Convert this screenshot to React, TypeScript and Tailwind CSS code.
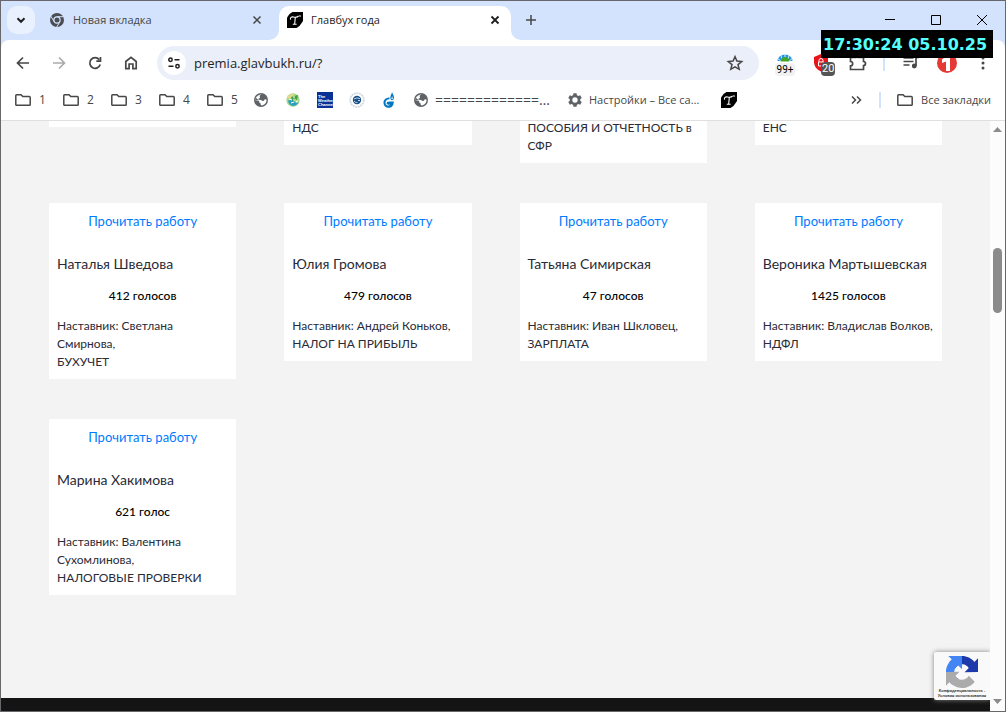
import type { ReactNode } from "react";

type Entry = { name: string; votes: string; mentor: string; topic: string };

const tails: string[] = ["", "НДС", "ПОСОБИЯ И ОТЧЕТНОСТЬ в СФР", "ЕНС"];

const entries: Entry[] = [
  { name: "Наталья Шведова", votes: "412 голосов", mentor: "Светлана Смирнова", topic: "БУХУЧЕТ" },
  { name: "Юлия Громова", votes: "479 голосов", mentor: "Андрей Коньков", topic: "НАЛОГ НА ПРИБЫЛЬ" },
  { name: "Татьяна Симирская", votes: "47 голосов", mentor: "Иван Шкловец", topic: "ЗАРПЛАТА" },
  { name: "Вероника Мартышевская", votes: "1425 голосов", mentor: "Владислав Волков", topic: "НДФЛ" },
  { name: "Марина Хакимова", votes: "621 голос", mentor: "Валентина Сухомлинова", topic: "НАЛОГОВЫЕ ПРОВЕРКИ" },
];

function Line({ children, size = 16, box = "0 0 16 16", w = 1.5 }: { children: ReactNode; size?: number; box?: string; w?: number }) {
  return (
    <svg width={size} height={size} viewBox={box} fill="none" stroke="currentColor" strokeWidth={w} aria-hidden="true" className="shrink-0">
      {children}
    </svg>
  );
}

function TIcon() {
  return (
    <svg width="16" height="16" viewBox="0 0 16 16" aria-hidden="true" className="shrink-0">
      <path d="M5.500 0H16V9L12.500 14L9.500 16H0V5.500L2.500 2Z" fill="#000" />
      <path d="M3.600 7.600C2.800 5.600 4.400 4.600 6.400 5C8.600 5.500 10.600 5.400 11.600 3.900M8.300 5.500L7.700 11.800M5.800 12.200H9.600M12.800 3.200L13.200 4.800" stroke="#fff" strokeWidth="1.100" fill="none" />
    </svg>
  );
}

function ChromeIcon() {
  return (
    <svg width="16" height="16" viewBox="0 0 16 16" aria-hidden="true" className="shrink-0">
      <circle cx="8" cy="8" r="7" fill="#4a4d51" />
      <circle cx="8" cy="8" r="3.700" fill="#d3e3fd" />
      <circle cx="8" cy="8" r="2.500" fill="#4a4d51" />
      <path d="M8 4.700H14.500M5.100 9.700L1.900 4.200M10.900 9.700L7.700 15" stroke="#d3e3fd" strokeWidth="1" />
    </svg>
  );
}

function Globe() {
  return (
    <svg width="16" height="16" viewBox="0 0 16 16" aria-hidden="true" className="shrink-0">
      <circle cx="8" cy="8" r="7" fill="#5f6368" />
      <path d="M8.500 2.600C6.800 3 6.200 4 6.900 4.900C7.600 5.700 6.200 6.200 5.400 6.800C4.800 7.600 6 8 7.600 7.900C9 7.900 9.200 9.200 10.300 9.100C11.400 9 11 7.600 12 7.300L13.600 7.600C13.700 10.600 11.600 13.300 8.600 13.600L7.600 12.500V11.300C6.300 11 5.800 10.200 6 9.300C4.800 9.400 3.500 9 2.600 8.300C2.400 5.200 5 2.600 8.500 2.600Z" fill="#fff" />
      <path d="M2.600 5.500L6 8.600H2.600ZM3 9.200H6.200V11.500L7.300 13.400L4.500 12.600Z" fill="#5f6368" />
    </svg>
  );
}

function Leaf() {
  return (
    <svg width="16" height="16" viewBox="0 0 16 16" aria-hidden="true" className="shrink-0">
      <circle cx="8" cy="8" r="6.700" fill="#a9d98c" />
      <path d="M2 6Q5 1 9 2L6 6Z" fill="#e6d98a" />
      <path d="M3 9Q6 5 9 9T14 9Q13 13 9 14Q4 14 3 9Z" fill="#2f9fc0" />
      <path d="M6 5L13 3L12 8L9 6L7 9Z" fill="#43a047" />
      <path d="M4 7L7 8M8 5L10 5M6 11L9 10M11 10L13 9" stroke="#fff" strokeWidth="1" />
    </svg>
  );
}

function Weather() {
  return (
    <span className="flex h-4 w-4 shrink-0 flex-col justify-end bg-[#0a3296] pb-px pl-px font-['Liberation_Sans'] text-[4px] leading-[4px] font-bold text-white">
      <span>The</span>
      <span>Weather</span>
      <span>Channel</span>
    </span>
  );
}

function Seal() {
  return (
    <svg width="16" height="16" viewBox="0 0 16 16" fill="none" aria-hidden="true" className="shrink-0">
      <circle cx="8" cy="8" r="6.800" stroke="#d2dae2" strokeWidth="1.800" strokeDasharray="2 0.600" />
      <circle cx="8" cy="8" r="4.200" fill="#1d5288" />
      <path d="M5 7Q8 5 11 6.600M5 9Q6.500 11 8.500 10.500M9 8.500H11" stroke="#b9d2e6" strokeWidth="1" />
    </svg>
  );
}

function Flame() {
  return (
    <svg width="16" height="16" viewBox="0 0 16 16" aria-hidden="true" className="shrink-0">
      <path d="M8.500 5.600C5 5.600 2.500 7.800 2.500 10.800C2.500 13.800 4.800 15.800 7.600 15.800C10.800 15.800 12.800 13.600 12.800 9.400H8.200C6.400 9.400 5.600 10.200 5.600 11.300C5.600 12.600 7 13.200 8.900 12.400C8.400 14 5.200 14 4.600 11.500C4.200 9 5.600 7.300 8.500 7.200Z" fill="#0079c2" />
      <path d="M11 0C11 1.800 9.300 3.200 9.300 5.400C9.300 6.900 10 8.200 11 8.200C12.200 8.200 13 7 13 5.400C13 3.400 11.600 2 11 0Z" fill="#0079c2" />
      <path d="M11.100 4L10.500 6.300L11.100 7.400L11.700 6.300Z" fill="#fff" />
    </svg>
  );
}

function Gear() {
  return (
    <svg width="16" height="16" viewBox="0 0 24 24" fill="#5f6368" aria-hidden="true" className="shrink-0">
      <path d="M19.800 13.300a8 8 0 0 0 0-2.600l2.300-1.800-2.300-4-2.800 1.100a8 8 0 0 0-2.200-1.300L14.400 1.800H9.600l-.4 2.900A8 8 0 0 0 7 6L4.200 4.900l-2.300 4 2.300 1.800a8 8 0 0 0 0 2.600l-2.300 1.800 2.300 4L7 18a8 8 0 0 0 2.200 1.300l.4 2.900h4.800l.4-2.900A8 8 0 0 0 17 18l2.800 1.100 2.300-4ZM12 16a4 4 0 1 1 0-8 4 4 0 0 1 0 8Z" />
    </svg>
  );
}

function Folder() {
  return (
    <Line size={20} box="0 0 20 20">
      <path d="M2.800 5.600Q2.800 4.800 3.600 4.800H8L9.800 6.600H16.400Q17.200 6.600 17.200 7.400V14.400Q17.200 15.200 16.400 15.200H3.600Q2.800 15.200 2.800 14.400Z" />
    </Line>
  );
}

function Tabs() {
  return (
    <header className="flex h-[39px] shrink-0 items-end bg-[#d3e3fd]">
      <button aria-label="Поиск вкладок" className="mb-1.5 ml-1.5 flex size-7 shrink-0 items-center justify-center rounded-[10px] bg-[#e9f1fe] text-[#1f1f1f]">
        <Line w={2}><path d="M4.500 6.300L8 9.800L11.500 6.300" /></Line>
      </button>
      <div className="flex h-[34px] w-[234px] shrink-0 items-center pr-1 pb-1.5 pl-3.5 text-[#474747]">
        <ChromeIcon />
        <span className="ml-2 flex-1">Новая вкладка</span>
        <button aria-label="Закрыть вкладку"><Line><path d="M4.500 4.500L11.500 11.500M11.500 4.500L4.500 11.500" /></Line></button>
      </div>
      <svg width="10" height="10" aria-hidden="true" className="shrink-0"><path d="M10 0V10H0A10 10 0 0 0 10 0Z" fill="#fff" /></svg>
      <div className="flex h-[34px] w-[232px] shrink-0 items-center rounded-t-[10px] bg-white px-2 pb-1.5 text-[#1f1f1f]">
        <TIcon />
        <span className="ml-2 flex-1">Главбух года</span>
        <button aria-label="Закрыть вкладку"><Line w={1.800}><path d="M4.500 4.500L11.500 11.500M11.500 4.500L4.500 11.500" /></Line></button>
      </div>
      <svg width="10" height="10" aria-hidden="true" className="shrink-0"><path d="M0 0V10H10A10 10 0 0 1 0 0Z" fill="#fff" /></svg>
      <button aria-label="Новая вкладка" className="mb-3 ml-0.5 text-[#474747]"><Line><path d="M8 3V13M3 8H13" /></Line></button>
      <div className="mr-[15px] mb-3 ml-auto flex gap-[30px] text-black">
        <button aria-label="Свернуть"><Line w={1}><path d="M3 7.500H13" /></Line></button>
        <button aria-label="Развернуть"><Line w={1}><path d="M3.500 3.500H12.500V12.500H3.500Z" /></Line></button>
        <button aria-label="Закрыть"><Line w={1}><path d="M3 3L13 13M13 3L3 13" /></Line></button>
      </div>
    </header>
  );
}

function Toolbar() {
  return (
    <div className="shrink-0 bg-[#d3e3fd]">
      <div className="flex h-[46px] items-center rounded-t-lg bg-white text-[#474747]">
        <div className="flex gap-4 pl-3">
          <button aria-label="Назад"><Line size={20} box="0 0 20 20" w={1.700}><path d="M16 10H4.500M10 4.500L4.500 10L10 15.500" /></Line></button>
          <button aria-label="Вперед" className="text-[#ababab]"><Line size={20} box="0 0 20 20" w={1.700}><path d="M4 10H15.500M10 4.500L15.500 10L10 15.500" /></Line></button>
          <button aria-label="Обновить"><Line size={20} box="0 0 20 20" w={1.700}><path d="M15.200 11.500A5.300 5.300 0 1 1 14.200 6.600M15.500 4V8.200H11.300" /></Line></button>
          <button aria-label="Главная"><Line size={20} box="0 0 20 20" w={1.700}><path d="M4.800 15.700V8.500L10 4.300L15.200 8.500V15.700H11.900V11H8.100V15.700Z" /></Line></button>
        </div>
        <div className="ml-4 flex h-[34px] min-w-0 flex-1 items-center rounded-full bg-[#ebeff9] pr-[14px] pl-[5px]">
          <button aria-label="Сведения о сайте" className="flex size-6 shrink-0 items-center justify-center rounded-full bg-white text-[#1f1f1f]">
            <Line><circle cx="4.500" cy="4.700" r="1.700" /><path d="M8.500 4.700H13.500M2.500 11.200H7.500" /><circle cx="11.500" cy="11.200" r="1.700" /></Line>
          </button>
          <input aria-label="Адресная строка" defaultValue="premia.glavbukh.ru/?" className="ml-2 min-w-0 flex-1 bg-transparent pt-0.5 font-['Open_Sans',sans-serif] text-[13px] text-[#1f1f1f] outline-none" />
          <button aria-label="Добавить в закладки">
            <Line size={20} box="0 0 20 20"><path d="M10 3.600L11.900 8.100L16.700 8.500L13 11.600L14.200 16.300L10 13.800L5.800 16.300L7 11.600L3.300 8.500L8.100 8.100Z" /></Line>
          </button>
        </div>
        <div className="ml-4 flex shrink-0 items-center">
          <button aria-label="Расширение погоды, 99+" className="flex w-5 flex-col items-center pt-1">
            <svg width="16" height="9" viewBox="0 0 16 9" aria-hidden="true">
              <path d="M0.500 7A7.500 6.500 0 0 1 15.500 7Z" fill="#2196e8" />
              <path d="M3.500 0L5 5M8 0V5M12.500 0L11 5M0 4L4 7M16 4L12 7" stroke="#fff" strokeWidth="0.800" />
              <path d="M3.500 7.500A4.500 4.500 0 0 1 12.500 7.500Z" fill="#43a52b" />
            </svg>
            <span className="rounded-sm bg-[#f1f1f1] px-0.5 font-['Roboto',sans-serif] text-[10px] leading-[13px] text-black">99+</span>
          </button>
          <button aria-label="Блокировщик, 20" className="relative ml-[18px]">
            <svg width="16" height="18" viewBox="0 0 16 18" aria-hidden="true">
              <path d="M1 3L8 0L15 3V9Q14 15 8 17.500Q2 15 1 9Z" fill="#e8141c" />
              <path d="M6 8V6.500A2 2 0 0 1 10 6.500V8M5.500 8H10.500V12H5.500Z" stroke="#fff" fill="none" />
            </svg>
            <span className="absolute top-2 left-2 rounded-sm bg-[#555] px-px font-['Roboto',sans-serif] text-[11px] leading-[14px] text-white">20</span>
          </button>
          <button aria-label="Расширения" className="ml-[18px]">
            <Line size={20} box="0 0 20 20" w={1.700}><path d="M3.500 4.500H8.500V3.500A1.500 1.500 0 0 1 11.500 3.500V4.500H16.500V8.500A2 2 0 0 1 16.500 12.500V16.500H3.500V12.800A2 2 0 0 0 3.500 8.500Z" /></Line>
          </button>
          <span className="ml-4 h-4 w-0.5 bg-[#d3e3fd]" />
          <button aria-label="Управление мультимедиа" className="ml-4">
            <Line size={20} box="0 0 20 20" w={1.700}><path d="M2.500 5H12.500M2.500 8.500H12.500M2.500 12H8.500M15 13V4.500H18" /><circle cx="13.300" cy="13" r="1.600" fill="currentColor" /></Line>
          </button>
          <button aria-label="Профиль" className="ml-4">
            <svg width="20" height="20" viewBox="0 0 20 20" aria-hidden="true">
              <circle cx="10" cy="10" r="10" fill="#e53935" />
              <path d="M8 4H13V18H9V8.500L5 10V6.500Z" fill="#fff" />
            </svg>
          </button>
          <button aria-label="Меню" className="mr-3 ml-4">
            <svg width="20" height="20" viewBox="0 0 20 20" fill="#474747" aria-hidden="true"><circle cx="10" cy="5" r="1.500" /><circle cx="10" cy="10" r="1.500" /><circle cx="10" cy="15" r="1.500" /></svg>
          </button>
        </div>
      </div>
    </div>
  );
}

function Bookmarks() {
  return (
    <nav aria-label="Закладки" className="flex h-[35px] shrink-0 items-center border-b border-[#dfdfdf] bg-white pb-1.5 pl-3 text-[#474747]">
      {["1", "2", "3", "4", "5"].map((n) => (
        <button key={n} className="flex w-12 shrink-0 items-center gap-1.5 text-xs"><Folder />{n}</button>
      ))}
      <a href="#globe" aria-label="Сайт" className="w-8 shrink-0"><Globe /></a>
      <a href="#eco" aria-label="Экология" className="w-8 shrink-0"><Leaf /></a>
      <a href="#weather" aria-label="Погода" className="w-8 shrink-0"><Weather /></a>
      <a href="#seal" aria-label="Служба" className="w-8 shrink-0"><Seal /></a>
      <a href="#gas" aria-label="Газ" className="w-8 shrink-0"><Flame /></a>
      <a href="#line" className="flex w-[154px] shrink-0 items-center gap-1.5 text-sm leading-4"><Globe />=============…</a>
      <a href="#settings" className="flex w-[154px] shrink-0 items-center gap-1.5 whitespace-nowrap"><Gear />Настройки – Все са…</a>
      <a href="#award" aria-label="Главбух года"><TIcon /></a>
      <button aria-label="Другие закладки" className="ml-auto"><Line><path d="M3 4.500L6.500 8L3 11.500M8 4.500L11.500 8L8 11.500" /></Line></button>
      <span className="ml-3.5 h-4 w-0.5 shrink-0 bg-[#d3e3fd]" />
      <button className="mr-3.5 ml-3.5 flex items-center gap-1.5 whitespace-nowrap"><Folder />Все закладки</button>
    </nav>
  );
}

function Card({ entry }: { entry: Entry }) {
  return (
    <article className="bg-white p-2">
      <a href="#work" className="block text-center text-[13px] leading-5 text-[#007bff]">Прочитать работу</a>
      <h2 className="mt-[23px] text-sm leading-5">{entry.name}</h2>
      <p className="mt-[13px] text-center font-medium text-black">{entry.votes}</p>
      <p className="mt-3">{`Наставник: ${entry.mentor},`}</p>
      <p>{entry.topic}</p>
    </article>
  );
}

export default function App() {
  return (
    <div className="relative flex h-screen flex-col overflow-hidden border border-[#68686c] font-['Open_Sans',sans-serif] text-[11px]">
      <Tabs />
      <Toolbar />
      <Bookmarks />
      <div className="flex min-h-0 flex-1">
        <main className="relative flex min-w-0 flex-1 flex-col overflow-hidden bg-[#f3f3f3] font-['Lato',sans-serif] text-xs leading-[18px] text-[#292b37]">
          <div className="-mt-0.5 grid grid-cols-4 items-start gap-x-12 gap-y-10 px-12">
            {tails.map((t, i) => (
              <article key={i} className="bg-white px-2 pb-2">{t}</article>
            ))}
            {entries.map((e) => <Card key={e.name} entry={e} />)}
          </div>
          <footer className="mt-auto h-[13px] shrink-0 bg-[#141414]" />
          <aside className="absolute right-0 bottom-[11px] flex h-12 w-14 flex-col items-center rounded-l-xs bg-[#f9f9f9] pt-1 shadow-[0_0_5px_#808080]">
            <svg width="32" height="32" viewBox="0 0 64 64" aria-hidden="true" className="shrink-0">
              <path d="M64 32C64 31.500 64 31.100 64 30.600V4.600L56.800 11.800C50.900 4.600 42 0 32 0C21.600 0 12.400 5 6.600 12.700L18.400 24.600C19.500 22.500 21.100 20.600 23 19.300C25 17.700 27.800 16.400 32 16.400C32.500 16.400 32.900 16.500 33.200 16.600C38.400 16.900 42.900 19.900 45.500 24.100L37.200 32.400Z" fill="#1c3aa9" />
              <path d="M31.900 0C31.500 0 31 0 30.600 0H4.600L11.800 7.200C4.600 13.100 0 22 0 32C0 42.400 5 51.600 12.700 57.400L24.600 45.600C22.500 44.500 20.600 42.900 19.300 41C17.700 39 16.400 36.200 16.400 32C16.400 31.500 16.500 31.100 16.600 30.800C16.900 25.600 19.900 21.100 24.100 18.500L32 26.500Z" fill="#4285f4" />
              <path d="M0 32C0 32.500 0 32.900 0 33.400V59.400L7.200 52.200C13.100 59.400 22 64 32 64C42.400 64 51.600 59 57.400 51.300L45.600 39.400C44.500 41.500 42.900 43.400 41 44.700C39 46.300 36.200 47.600 32 47.600C31.500 47.600 31.100 47.500 30.800 47.400C25.600 47.100 21.100 44.100 18.500 39.900L26.800 31.600Z" fill="#ababab" />
            </svg>
            <span className="font-['Liberation_Sans'] text-[4px] leading-[5px] font-bold whitespace-nowrap text-[#333]">Конфиденциальность -</span>
            <span className="font-['Liberation_Sans'] text-[4px] leading-[5px] font-bold whitespace-nowrap text-[#333]">Условия использования</span>
          </aside>
        </main>
        <div className="flex w-[15px] shrink-0 flex-col items-center bg-[#fcfcfc]">
          <svg width="9" height="5" viewBox="0 0 9 5" aria-hidden="true" className="mt-1.5 shrink-0"><path d="M0 5L4.500 0L9 5Z" fill="#8b8b8b" /></svg>
          <div className="mt-[116px] h-[65px] w-[9px] shrink-0 rounded-full bg-[#8b8b8b]" />
          <svg width="9" height="5" viewBox="0 0 9 5" aria-hidden="true" className="mt-auto mb-[7px] shrink-0"><path d="M0 0H9L4.500 5Z" fill="#8b8b8b" /></svg>
        </div>
      </div>
      <time className="absolute top-[29px] right-3 flex h-7 w-[172px] items-center bg-black px-0.5 pt-0.5 font-['DejaVu_Sans',sans-serif] text-base font-bold whitespace-nowrap text-[#55ffff]">
        17:30:24 05.10.25
      </time>
    </div>
  );
}
